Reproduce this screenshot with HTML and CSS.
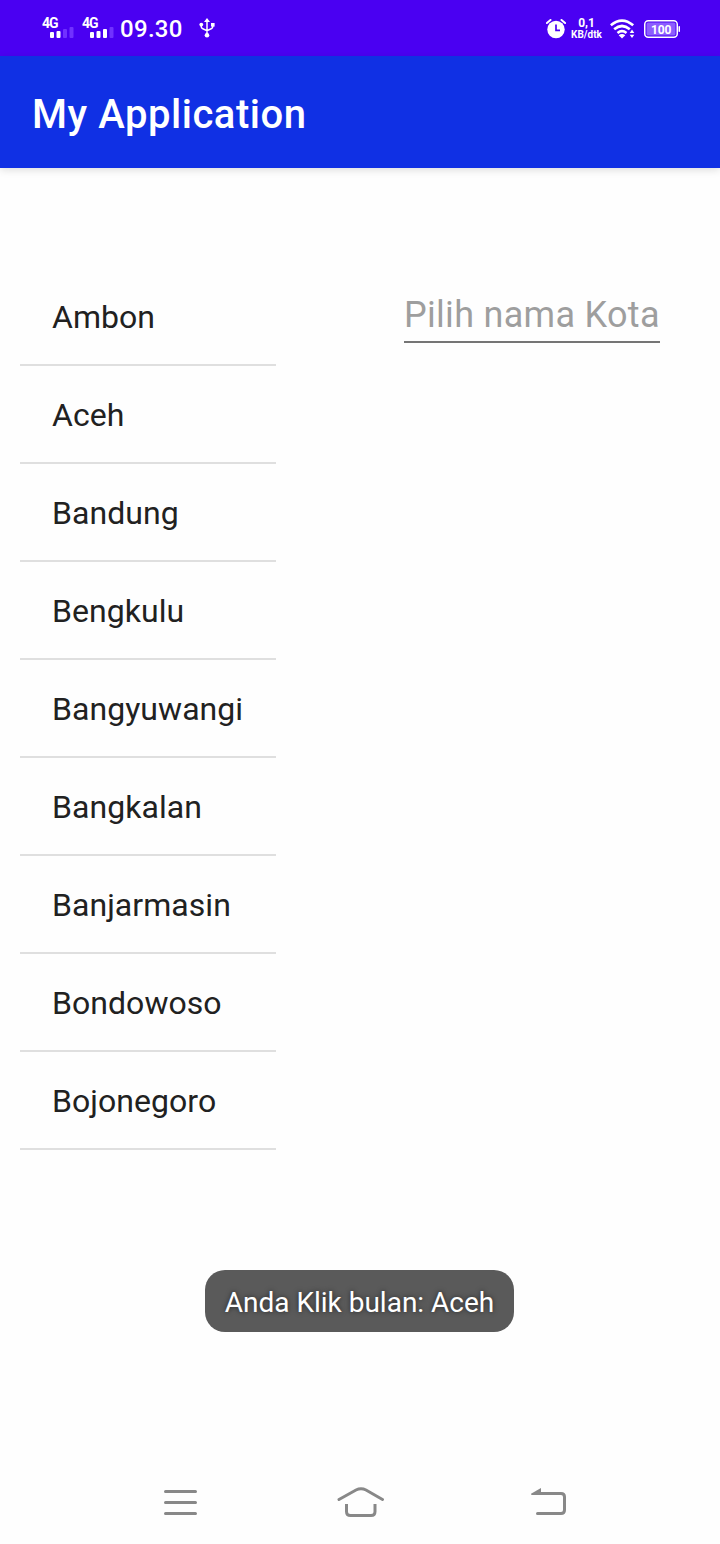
FILE: index.html
```html
<!DOCTYPE html>
<html lang="id">
<head>
<meta charset="utf-8">
<title>My Application</title>
<link rel="stylesheet" href="styles.css">
</head>
<body>
<div class="screen">
  <div class="status-bar">
    <div class="status-left">
      <svg class="signal" width="32" height="24" viewBox="0 0 32 24">
        <text class="net" x="0" y="12" textLength="16.500">4G</text>
        <g fill="#fff"><rect x="8" y="16" width="4" height="6" rx="1"/><rect x="14.500" y="15" width="4" height="7" rx="1"/></g>
        <g fill="#7131ff"><rect x="21" y="13" width="4" height="9" rx="1"/><rect x="27.500" y="11" width="4" height="11" rx="1"/></g>
      </svg>
      <svg class="signal" width="32" height="24" viewBox="0 0 32 24">
        <text class="net" x="0" y="12" textLength="16.500">4G</text>
        <g fill="#fff"><rect x="8" y="16" width="4" height="6" rx="1"/><rect x="14.500" y="15" width="4" height="7" rx="1"/><rect x="21" y="13" width="4" height="9" rx="1"/></g>
        <rect x="27.500" y="11" width="4" height="11" rx="1" fill="#7131ff"/>
      </svg>
      <span class="clock">09.30</span>
      <svg class="usb" width="16" height="20" viewBox="0 0 16 20">
        <path d="M8 3v14M2.200 6v2.600q0 1.600 1.600 2.200L8 12.600l4.200-1.800q1.600-.6 1.600-2.200V6" fill="none" stroke="#fff" stroke-width="1.500"/>
        <path d="M8 0l3 4H5z" fill="#fff"/><circle cx="2.300" cy="6.600" r="1.900" fill="#fff"/><rect x="12" y="5" width="3.600" height="3.600" fill="#fff"/><circle cx="8" cy="17.300" r="2.300" fill="#fff"/>
      </svg>
    </div>
    <div class="status-right">
      <svg width="20" height="20" viewBox="0 0 20 20">
        <circle cx="10" cy="10.500" r="8.700" fill="#fff"/>
        <path d="M.9 4L4.500 1M19.100 4L15.500 1" stroke="#fff" stroke-width="2" stroke-linecap="round"/>
        <path d="M10 5.500v5.800h4" fill="none" stroke="#4a00f2" stroke-width="1.700"/>
      </svg>
      <div class="speed"><span class="rate">0,1</span><span class="unit">KB/dtk</span></div>
      <svg class="wifi" width="25" height="20" viewBox="0 0 25 20">
        <g fill="none" stroke="#fff" stroke-width="2.700"><path d="M.8 6.300Q12 -3.200 23.200 6.300"/><path d="M4.200 10.300Q12 3.700 19.800 10.300"/><path d="M7.500 14Q12 10.400 16.500 14"/></g>
        <path d="M8.700 16.200Q12 13.800 15.300 16.200L12 19.500z" fill="#fff"/>
        <path d="M22 10.500l2.300 3.500h-4.600zM22 19l2.300-3.300h-4.600z" fill="#fff"/>
      </svg>
      <svg width="36" height="18" viewBox="0 0 36 18">
        <rect x=".75" y=".75" width="32.500" height="16.500" rx="3.500" fill="none" stroke="#fff" stroke-width="1.500"/>
        <rect x="2.500" y="2.500" width="29" height="13" rx="1.500" fill="#8c5cff"/>
        <rect x="34.500" y="6" width="1.500" height="6" rx=".7" fill="#fff"/>
        <text class="level" x="7" y="13.800" textLength="20.500">100</text>
      </svg>
    </div>
  </div>
  <header class="app-bar"><h1 class="title">My Application</h1></header>
  <main class="content">
    <ul class="cities">
      <li class="city">Ambon</li>
      <li class="city">Aceh</li>
      <li class="city">Bandung</li>
      <li class="city">Bengkulu</li>
      <li class="city">Bangyuwangi</li>
      <li class="city">Bangkalan</li>
      <li class="city">Banjarmasin</li>
      <li class="city">Bondowoso</li>
      <li class="city">Bojonegoro</li>
    </ul>
    <div class="field">Pilih nama Kota</div>
  </main>
  <div class="toast">Anda Klik bulan: Aceh</div>
  <nav class="nav-bar">
    <svg width="34" height="34" viewBox="0 0 34 34"><path d="M1.500 6.500h30M1.500 17.500h30M1.500 28.500h30" stroke="#888" stroke-width="3" stroke-linecap="round"/></svg>
    <svg class="home" width="48" height="34" viewBox="0 0 48 34"><g fill="none" stroke="#888" stroke-width="3" stroke-linecap="round"><path d="M2 14.500L19 5Q24 2.400 29 5L45.500 14.500"/><path d="M9.500 19v7.500q0 4 4 4h20.500q4 0 4-4V19" stroke-linecap="butt"/></g></svg>
    <svg width="36" height="34" viewBox="0 0 36 34"><path d="M5 8.500h25q3.500 0 3.500 3.500v13q0 3.500-3.500 3.500H6.500" fill="none" stroke="#888" stroke-width="3" stroke-linecap="round"/><path d="M0 8.800L10 3v7H1q-1 0-1-1.200z" fill="#888"/></svg>
  </nav>
</div>
</body>
</html>
```
FILE: styles.css
```css
body {
  margin: 0;
  background: #fefefe;
  font-family: Roboto, sans-serif;
}
.screen {
  width: 720px;
  height: 1544px;
  display: flex;
  flex-direction: column;
  background: #fefefe;
}
svg {
  display: block;
  flex: none;
}
.status-bar {
  height: 56px;
  box-sizing: border-box;
  padding: 2px 40px 0 42px;
  display: flex;
  align-items: center;
  justify-content: space-between;
  background: #4a00f2;
  color: #fff;
}
.status-left,
.status-right {
  display: flex;
  align-items: center;
}
.signal {
  margin: 0 8px 2px 0;
}
.net {
  fill: #fff;
  font-size: 14px;
  font-weight: 700;
}
.clock {
  width: 64px;
  margin-left: -2px;
  font-size: 24px;
  line-height: 28px;
  font-weight: 500;
  letter-spacing: 0.3px;
}
.usb {
  margin: 0 0 2px 15px;
}
.speed {
  width: 31px;
  margin: 0 8px 0 5px;
  display: flex;
  flex-direction: column;
  align-items: center;
  font-weight: 700;
}
.rate {
  font-size: 12px;
  line-height: 11px;
}
.unit {
  font-size: 10px;
  line-height: 11px;
}
.wifi {
  margin-right: 9px;
}
.level {
  fill: #fff;
  font-size: 12px;
  font-weight: 700;
}
.app-bar {
  height: 112px;
  padding: 0 32px;
  display: flex;
  align-items: center;
  background: #1030e4;
  box-shadow: 0 2px 8px rgba(0, 0, 0, 0.13);
}
.title {
  margin: 6px 0 0;
  color: #fff;
  font-size: 40px;
  line-height: 48px;
  font-weight: 500;
  letter-spacing: 0.55px;
}
.content {
  padding: 100px 60px 0 20px;
  display: flex;
  align-items: flex-start;
  justify-content: space-between;
}
.cities {
  width: 256px;
  margin: 0;
  padding: 0;
  list-style: none;
}
.city {
  height: 98px;
  box-sizing: border-box;
  padding-left: 32px;
  border-bottom: 2px solid #dfdfdf;
  color: #212121;
  font-size: 32px;
  line-height: 98px;
  letter-spacing: 0.05px;
}
.field {
  width: 256px;
  height: 49px;
  margin-top: 24px;
  border-bottom: 2px solid #757575;
  color: #9e9e9e;
  font-size: 36px;
  line-height: 46px;
  letter-spacing: 0.3px;
  white-space: nowrap;
}
.toast {
  width: 309px;
  height: 62px;
  margin: 120px 0 0 205px;
  border-radius: 20px;
  background: #5a5a5a;
  color: #fff;
  font-size: 28px;
  line-height: 65px;
  text-align: center;
  text-shadow: 0 0 5px rgba(0, 0, 0, 0.6);
}
.nav-bar {
  height: 34px;
  margin-top: auto;
  padding: 0 153px 25px 164px;
  display: flex;
  justify-content: space-between;
}
.home {
  margin-right: 8px;
}
```
